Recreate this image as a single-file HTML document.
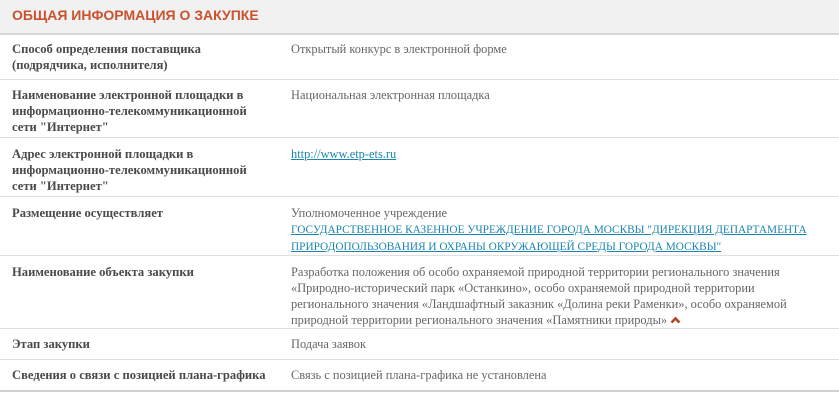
<!DOCTYPE html>
<html><head><meta charset="utf-8"><style>
body{margin:0;width:839px;height:409px;background:#fff;position:relative;overflow:hidden;font-family:"Liberation Serif","DejaVu Serif",serif;}
.hd{position:absolute;left:0;top:0;width:839px;height:33px;background:#f1f1f1;border-bottom:2px solid #d6d6d6;}
.hd span{position:absolute;left:12px;top:7px;font:bold 14px "Liberation Sans",sans-serif;color:#c8532e;}
.ln{position:absolute;left:0;width:839px;height:1px;background:#e0e0e0}
.l{position:absolute;left:12px;width:270px;font-size:12.6px;line-height:16px;font-weight:bold;color:#4a4a4a;white-space:nowrap}
.v{position:absolute;left:291px;width:545px;font-size:12.4px;line-height:16px;color:#666;white-space:nowrap}
a{color:#1a86b0;text-decoration:underline}
.up{font-size:11.3px}
</style></head><body>
<div class="hd"><span>ОБЩАЯ ИНФОРМАЦИЯ О ЗАКУПКЕ</span></div>
<div class="l" style="top:41px">Способ определения поставщика<br>(подрядчика, исполнителя)</div>
<div class="v" style="top:41px">Открытый конкурс в электронной форме</div>
<div class="ln" style="top:79px"></div>
<div class="l" style="top:87px">Наименование электронной площадки в<br>информационно-телекоммуникационной<br>сети "Интернет"</div>
<div class="v" style="top:87px">Национальная электронная площадка</div>
<div class="ln" style="top:137px"></div>
<div class="l" style="top:146px">Адрес электронной площадки в<br>информационно-телекоммуникационной<br>сети "Интернет"</div>
<div class="v" style="top:146px"><a>http://www.etp-ets.ru</a></div>
<div class="ln" style="top:196px"></div>
<div class="l" style="top:205px">Размещение осуществляет</div>
<div class="v" style="top:205px">Уполномоченное учреждение<br><a class="up">ГОСУДАРСТВЕННОЕ КАЗЕННОЕ УЧРЕЖДЕНИЕ ГОРОДА МОСКВЫ "ДИРЕКЦИЯ ДЕПАРТАМЕНТА</a><br><a class="up">ПРИРОДОПОЛЬЗОВАНИЯ И ОХРАНЫ ОКРУЖАЮЩЕЙ СРЕДЫ ГОРОДА МОСКВЫ"</a></div>
<div class="ln" style="top:255px"></div>
<div class="l" style="top:264px">Наименование объекта закупки</div>
<div class="v" style="top:264px">Разработка положения об особо охраняемой природной территории регионального значения<br>«Природно-исторический парк «Останкино», особо охраняемой природной территории<br>регионального значения «Ландшафтный заказник «Долина реки Раменки», особо охраняемой<br>природной территории регионального значения «Памятники природы» <svg width="11" height="8" viewBox="0 0 11 8" style="vertical-align:0"><path d="M1.5 6.5 L5.5 2.5 L9.5 6.5" stroke="#b8431f" stroke-width="2.6" fill="none"/></svg></div>
<div class="ln" style="top:328px"></div>
<div class="l" style="top:336px">Этап закупки</div>
<div class="v" style="top:336px">Подача заявок</div>
<div class="ln" style="top:359px"></div>
<div class="l" style="top:367px">Сведения о связи с позицией плана-графика</div>
<div class="v" style="top:367px">Связь с позицией плана-графика не установлена</div>
<div class="ln" style="top:390px;height:2px;background:#d0d0d0"></div>
</body></html>
